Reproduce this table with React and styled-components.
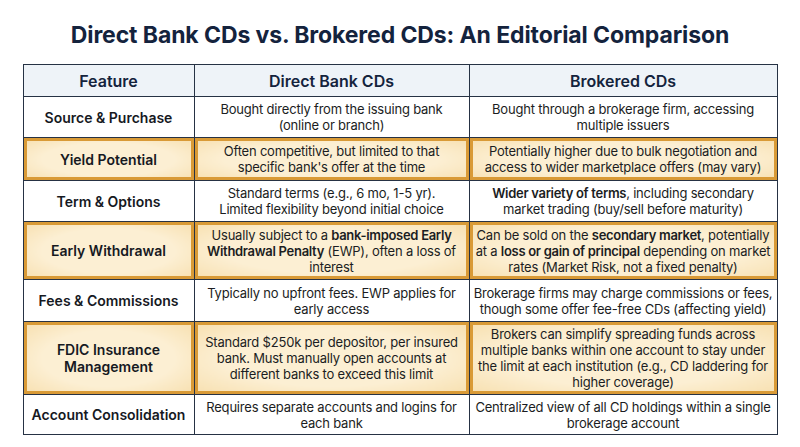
import React from "react";
import styled, { createGlobalStyle, css } from "styled-components";

const Global = createGlobalStyle`
  html, body { margin: 0; padding: 0; background: #ffffff; }
  body { font-family: Inter, "Noto Sans", sans-serif; color: #16191f; }
`;

const Page = styled.div`
  width: 800px;
  height: 447px;
  box-sizing: border-box;
  padding: 20px 23px 0 23px;
  display: flex;
  flex-direction: column;
  align-items: center;
`;

const Title = styled.h1`
  margin: 0 0 13px 0;
  font-size: 23px;
  line-height: 31px;
  font-weight: 700;
  color: #14233d;
  letter-spacing: -0.1px;
`;

const Table = styled.table`
  width: 754px;
  border-collapse: collapse;
  table-layout: fixed;
  border: 1.5px solid #263244;
`;

const HeadCell = styled.th`
  background: #eef3f8;
  border: 1.5px solid #263244;
  font-size: 16px;
  font-weight: 600;
  color: #14233d;
  height: 31px;
  padding: 0;
  text-align: center;
`;

const highlight = css`
  background: radial-gradient(ellipse at center, #fcefd3 55%, #f7dfae 100%);
  box-shadow: inset 0 0 0 3px #d99a36;
`;

const FeatureCell = styled.td`
  border: 1.5px solid #263244;
  font-size: 14px;
  font-weight: 600;
  line-height: 17px;
  text-align: center;
  padding: 3px 4px;
  color: #16191f;
  ${(p) => p.$hl && highlight}
`;

const Cell = styled.td`
  border: 1.5px solid #263244;
  font-size: 13px;
  line-height: 16px;
  text-align: center;
  padding: 3px 4px;
  color: #1b1d22;
  letter-spacing: -0.2px;
  ${(p) => p.$hl && highlight}
  b { font-weight: 600; letter-spacing: -0.3px; }
`;

const rows = [
  {
    f: "Source & Purchase",
    d: <>Bought directly from the issuing bank<br />(online or branch)</>,
    b: "Bought through a brokerage firm, accessing multiple issuers",
    h: 41,
  },
  {
    f: "Yield Potential",
    hl: true,
    d: <>Often competitive, but limited to that<br />specific bank's offer at the time</>,
    b: "Potentially higher due to bulk negotiation and access to wider marketplace offers (may vary)",
    h: 43,
  },
  {
    f: "Term & Options",
    d: (
      <>
        Standard terms (e.g., 6 mo, 1-5 yr).<br />Limited flexibility beyond initial choice
      </>
    ),
    b: (
      <>
        <b>Wider variety of terms</b>, including secondary market trading (buy/sell before maturity)
      </>
    ),
    h: 41,
  },
  {
    f: "Early Withdrawal",
    hl: true,
    d: (
      <>
        Usually subject to a <b>bank-imposed Early</b><br /><b>Withdrawal Penalty</b> (EWP), often a loss of interest
      </>
    ),
    b: (
      <>
        Can be sold on the <b>secondary market</b>, potentially at a <b>loss or gain of principal</b> depending on market rates (Market Risk, not a fixed penalty)
      </>
    ),
    h: 58,
  },
  {
    f: "Fees & Commissions",
    d: <>Typically no upfront fees. EWP applies for<br />early access</>,
    b: "Brokerage firms may charge commissions or fees, though some offer fee-free CDs (affecting yield)",
    h: 42,
  },
  {
    f: (
      <>
        FDIC Insurance<br />Management
      </>
    ),
    hl: true,
    d: <>Standard $250k per depositor, per insured<br />bank. Must manually open accounts at<br />different banks to exceed this limit</>,
    b: "Brokers can simplify spreading funds across multiple banks within one account to stay under the limit at each institution (e.g., CD laddering for higher coverage)",
    h: 73,
  },
  {
    f: "Account Consolidation",
    d: <>Requires separate accounts and logins for<br />each bank</>,
    b: "Centralized view of all CD holdings within a single brokerage account",
    h: 40,
  },
];

const Row = styled.tr``;

export default function App() {
  return (
    <>
      <Global />
      <Page>
        <Title>Direct Bank CDs vs. Brokered CDs: An Editorial Comparison</Title>
        <Table>
          <colgroup>
            <col style={{ width: 171 }} />
            <col style={{ width: 275 }} />
            <col style={{ width: 308 }} />
          </colgroup>
          <thead>
            <tr>
              <HeadCell>Feature</HeadCell>
              <HeadCell>Direct Bank CDs</HeadCell>
              <HeadCell>Brokered CDs</HeadCell>
            </tr>
          </thead>
          <tbody>
            {rows.map((r, i) => (
              <Row key={i} style={{ height: r.h }}>
                <FeatureCell $hl={r.hl}>{r.f}</FeatureCell>
                <Cell $hl={r.hl}>{r.d}</Cell>
                <Cell $hl={r.hl}>{r.b}</Cell>
              </Row>
            ))}
          </tbody>
        </Table>
      </Page>
    </>
  );
}
